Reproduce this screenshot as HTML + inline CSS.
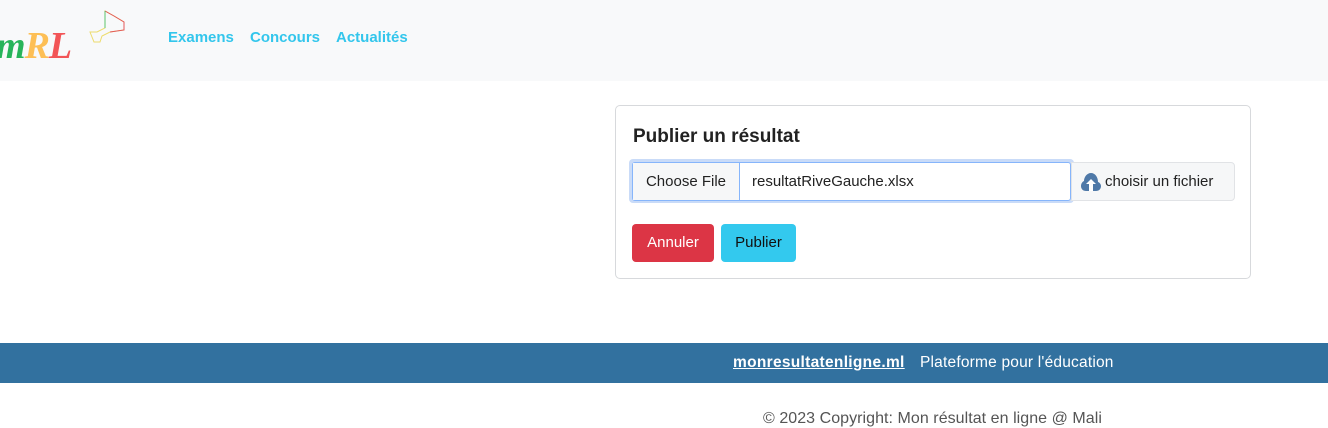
<!DOCTYPE html>
<html><head><meta charset="utf-8"><style>
body{margin:0;width:1328px;height:421px;overflow:hidden;background:#fff;font-family:"Liberation Sans",sans-serif;position:relative}
.nav{position:absolute;left:0;top:0;width:1328px;height:81px;background:#f8f9fa}
.nav a{position:absolute;top:29px;font-weight:bold;font-size:15px;color:#33c6ec;text-decoration:none}
.card{position:absolute;left:615px;top:105px;width:634px;height:172px;border:1px solid #d7d9dc;border-radius:5px}
.abs{position:absolute}
</style></head><body>
<div class="nav">
<div class="abs" style="left:-4px;top:24px;font:italic bold 38px 'Liberation Serif',serif;letter-spacing:-1px"><span style="color:#27b45a">m</span><span style="color:#fdbf55">R</span><span style="color:#f25557">L</span></div>
<svg class="abs" style="left:88px;top:8px" width="40" height="38"><path d="M17 3 L17 20 L9 24 L2 24 L6 34 L12 34 L14 28 L22 24 L36 22 L36 14 L26 8 Z" fill="none" stroke="#eddc6d" stroke-width="1"/><path d="M17 3 L26 8 L36 14 L36 22 L22 24" fill="none" stroke="#e35858" stroke-width="1"/><path d="M17 3 L17 20" stroke="#5bc46a"/></svg>
<a style="left:168px">Examens</a><a style="left:250px">Concours</a><a style="left:336px">Actualités</a>
</div>
<div class="card">
<div class="abs" style="left:17px;top:20px;font-size:19px;font-weight:bold;color:#222">Publier un résultat</div>
<div class="abs" style="left:13px;top:53px;width:445px;height:44px;background:#c9dbf8;border-radius:4px"></div>
<div class="abs" style="left:16px;top:56px;width:437px;height:37px;border:1px solid #86b5fb;border-radius:3px;background:#fff;font-size:15px;color:#222">
<div class="abs" style="left:0;top:0;width:106px;height:37px;background:#f6f7f8;border-right:1px solid #86b5fb;text-align:center;line-height:37px">Choose File</div>
<div class="abs" style="left:119px;top:0;line-height:37px">resultatRiveGauche.xlsx</div></div>
<div class="abs" style="left:455px;top:56px;width:162px;height:37px;background:#f6f7f8;border:1px solid #e1e3e6;border-radius:0 4px 4px 0;font-size:15px;color:#222;line-height:37px">
<svg class="abs" style="left:9px;top:9px" width="20" height="20"><path d="M10 1 C6 1 3 5 3 9 C1 10 0 12 0 14 C0 17 2 19 5 19 L15 19 C18 19 20 17 20 14 C20 12 18 10 17 10 C17 5 14 1 10 1Z" fill="#4f79a8"/><path d="M10 7 L5 12 L8 12 L8 19 L12 19 L12 12 L15 12Z" fill="#fff"/></svg>
<span class="abs" style="left:33px">choisir un fichier</span></div>
<div class="abs" style="left:16px;top:118px;width:82px;height:38px;background:#dc3545;border-radius:4px;color:#fff;font-size:15px;line-height:38px;text-align:center">Annuler</div>
<div class="abs" style="left:105px;top:118px;width:75px;height:38px;background:#33c9ee;border-radius:4px;color:#111;font-size:15px;line-height:38px;text-align:center">Publier</div>
</div>
<div class="abs" style="left:0;top:343px;width:1328px;height:40px;background:#32719f;color:#fff;font-size:15.5px;line-height:40px">
<span class="abs" style="left:733px;font-weight:bold;text-decoration:underline;letter-spacing:0.3px">monresultatenligne.ml</span>
<span class="abs" style="left:920px;letter-spacing:0.2px">Plateforme pour l'éducation</span></div>
<div class="abs" style="left:763px;top:410px;font-size:16px;color:#555;letter-spacing:0.05px">© 2023 Copyright: Mon résultat en ligne @ Mali</div>
</body></html>
